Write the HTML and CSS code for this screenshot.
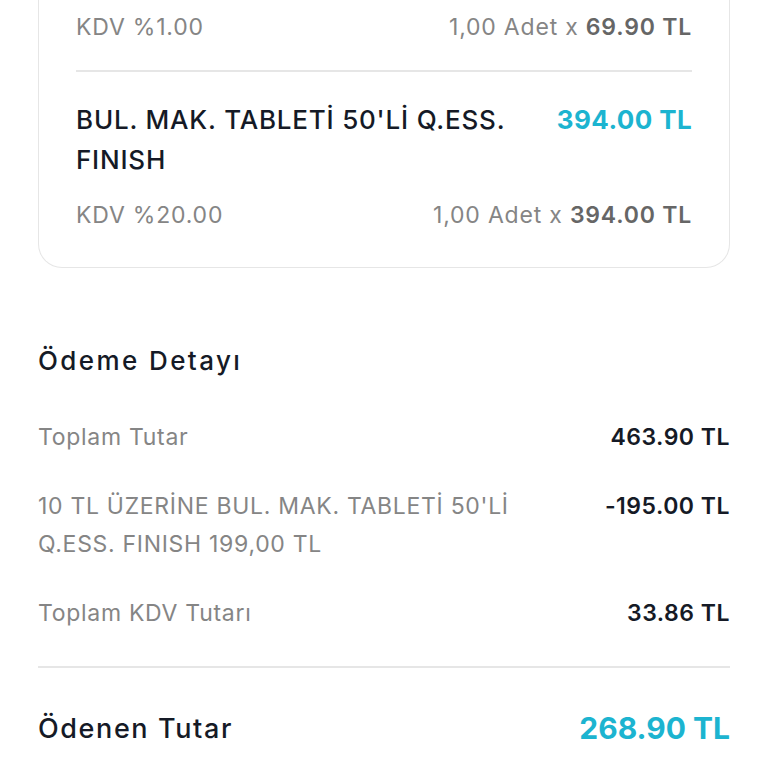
FILE: index.html
```html
<!DOCTYPE html>
<html lang="tr">
<head>
  <meta charset="UTF-8" />
  <meta name="viewport" content="width=device-width, initial-scale=1.0"/>
  <title>Sipariş Detayı</title>
  <link rel="stylesheet" href="styles.css">
</head>
<body>
  <div class="sayfa">
    <!-- Ürün kartı (üst kısmı kaydırılmış) -->
    <div class="kart">
      <div class="urun urun-ilk">
        <div class="urun-alt">
          <span>KDV %1.00</span>
          <span>1,00 Adet x <b>69.90 TL</b></span>
        </div>
      </div>

      <div class="urun">
        <div class="urun-ust">
          <span class="urun-ad">BUL. MAK. TABLETİ 50'Lİ Q.ESS. FINISH</span>
          <span class="urun-fiyat">394.00 TL</span>
        </div>
        <div class="urun-alt">
          <span>KDV %20.00</span>
          <span>1,00 Adet x <b>394.00 TL</b></span>
        </div>
      </div>
    </div>

    <!-- Ödeme detayı -->
    <div class="odeme">
      <h3>Ödeme Detayı</h3>

      <div class="satirlar">
        <div class="satir">
          <span class="etiket">Toplam Tutar</span>
          <span class="deger">463.90 TL</span>
        </div>
        <div class="satir">
          <span class="etiket">10 TL ÜZERİNE BUL. MAK. TABLETİ 50'Lİ Q.ESS. FINISH 199,00 TL</span>
          <span class="deger">-195.00 TL</span>
        </div>
        <div class="satir">
          <span class="etiket">Toplam KDV Tutarı</span>
          <span class="deger">33.86 TL</span>
        </div>
      </div>

      <div class="toplam">
        <span>Ödenen Tutar</span>
        <span class="toplam-deger">268.90 TL</span>
      </div>
    </div>
  </div>
</body>
</html>
```

FILE: styles.css
```css
:root {
  --koyu: #151a26;
  --gri: #858585;
  --gri-koyu: #666;
  --mavi: #1cb4d0;
  --cizgi: #e6e6e6;
}

* {
  margin: 0;
  padding: 0;
  box-sizing: border-box;
  font-family: 'Inter', sans-serif;
}

body {
  background: #fff;
  width: 768px;
  height: 768px;
  overflow: hidden;
}

.sayfa {
  padding: 0 38px;
}

.kart {
  margin-top: -24px;
  border: 1.5px solid var(--cizgi);
  border-top: none;
  border-radius: 0 0 24px 24px;
  padding: 0 37px 37px;
}

.urun {
  padding-top: 36px;
}

.urun-ilk {
  padding-bottom: 28px;
  border-bottom: 2px solid var(--cizgi);
}

.urun + .urun {
  padding-top: 28px;
}

.urun-ust {
  display: flex;
  justify-content: space-between;
  gap: 28px;
  margin-bottom: 20px;
}

.urun-ad {
  font-size: 26px;
  line-height: 40px;
  font-weight: 500;
  letter-spacing: 0.8px;
  color: var(--koyu);
}

.urun-fiyat {
  font-size: 26px;
  line-height: 40px;
  font-weight: 700;
  letter-spacing: 0.4px;
  color: var(--mavi);
  white-space: nowrap;
}

.urun-alt {
  display: flex;
  justify-content: space-between;
  font-size: 23px;
  line-height: 30px;
  letter-spacing: 0.8px;
  color: var(--gri);
}

.urun-alt b {
  color: var(--gri-koyu);
  font-weight: 600;
}

.odeme h3 {
  font-size: 26px;
  font-weight: 500;
  letter-spacing: 2.4px;
  color: var(--koyu);
  margin: 76px 0 40px;
  line-height: 34px;
}

.satirlar {
  display: flex;
  flex-direction: column;
  gap: 31px;
  padding-bottom: 34px;
  border-bottom: 2px solid var(--cizgi);
}

.satir {
  display: flex;
  justify-content: space-between;
  align-items: flex-start;
  gap: 60px;
}

.etiket {
  font-size: 23px;
  line-height: 38px;
  letter-spacing: 0.7px;
  color: var(--gri);
  max-width: 490px;
}

.deger {
  font-size: 23px;
  line-height: 38px;
  font-weight: 600;
  letter-spacing: 0.5px;
  color: var(--koyu);
  white-space: nowrap;
}

.toplam {
  display: flex;
  justify-content: space-between;
  align-items: center;
  padding-top: 42px;
  font-size: 27px;
  font-weight: 500;
  letter-spacing: 1.6px;
  color: var(--koyu);
}

.toplam-deger {
  font-size: 30px;
  font-weight: 700;
  letter-spacing: 0;
  color: var(--mavi);
}
```
